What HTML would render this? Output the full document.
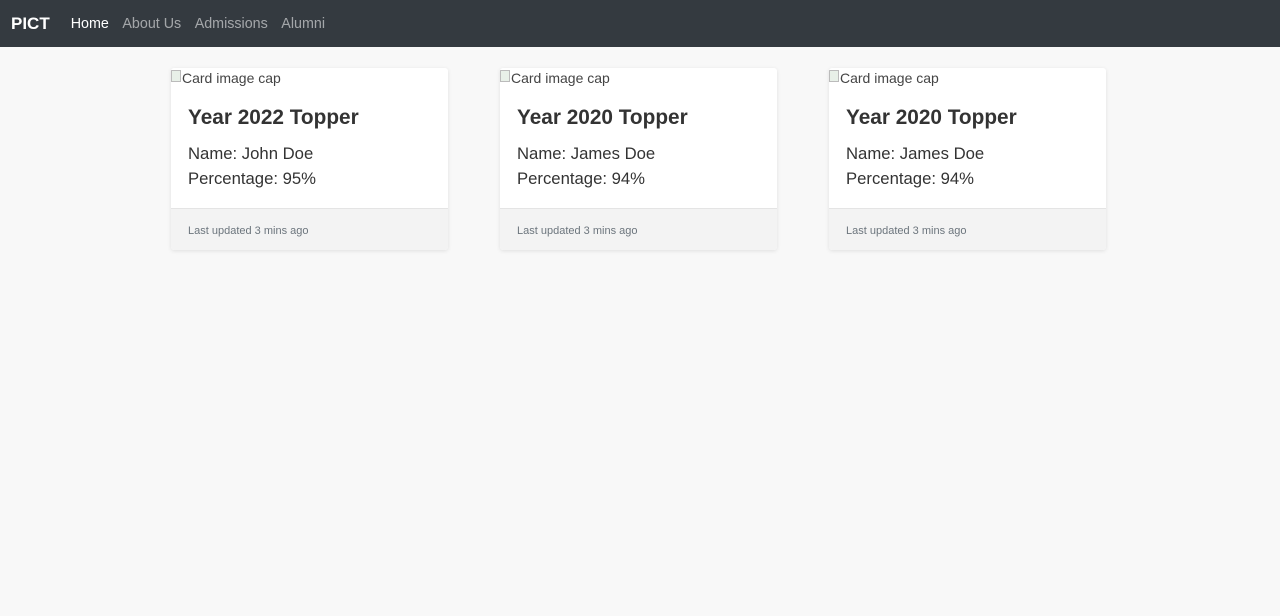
<!DOCTYPE html>
<html><head><style>
body{margin:0;background:#f8f8f8;font-family:"Liberation Sans",Arial,sans-serif;width:1280px;height:616px;overflow:hidden}
nav{height:47px;background:#343a40;display:flex;align-items:center}
.brand{color:#fff;font-weight:bold;font-size:17px;margin-left:11px;margin-right:21px}
nav a{font-size:14.3px;color:rgba(255,255,255,.55);margin-right:13.5px;text-decoration:none}
nav a.act{color:#fff}
.card{position:absolute;top:68px;width:277px;height:182px;background:#fff;border-radius:3px;box-shadow:0 1px 4px rgba(0,0,0,.1);overflow:hidden}
.cap{position:absolute;left:0;top:2px;font-size:14px;color:#444;padding-left:11px}
.cap:before{content:"";position:absolute;left:0;top:0;width:10px;height:12px;border:1px solid #bbb;box-sizing:border-box;background:#e8f0e8}
h5{position:absolute;left:17px;top:38px;margin:0;font-size:20.8px;font-weight:bold;color:#333}
.t{position:absolute;left:17px;font-size:16.7px;color:#333}
.ft{position:absolute;left:0;top:140px;width:100%;height:42px;background:#f3f3f3;border-top:1px solid #e4e4e4;box-sizing:border-box;font-size:11px;color:#6c757d;padding:16px 17px}
</style></head><body>
<nav><span class="brand">PICT</span><a class="act">Home</a><a>About Us</a><a>Admissions</a><a>Alumni</a></nav>
<div class="card" style="left:171px"><div class="cap">Card image cap</div><h5>Year 2022 Topper</h5><div class="t" style="top:76px">Name: John Doe</div><div class="t" style="top:101px">Percentage: 95%</div><div class="ft">Last updated 3 mins ago</div></div>
<div class="card" style="left:500px"><div class="cap">Card image cap</div><h5>Year 2020 Topper</h5><div class="t" style="top:76px">Name: James Doe</div><div class="t" style="top:101px">Percentage: 94%</div><div class="ft">Last updated 3 mins ago</div></div>
<div class="card" style="left:829px"><div class="cap">Card image cap</div><h5>Year 2020 Topper</h5><div class="t" style="top:76px">Name: James Doe</div><div class="t" style="top:101px">Percentage: 94%</div><div class="ft">Last updated 3 mins ago</div></div>
</body></html>
